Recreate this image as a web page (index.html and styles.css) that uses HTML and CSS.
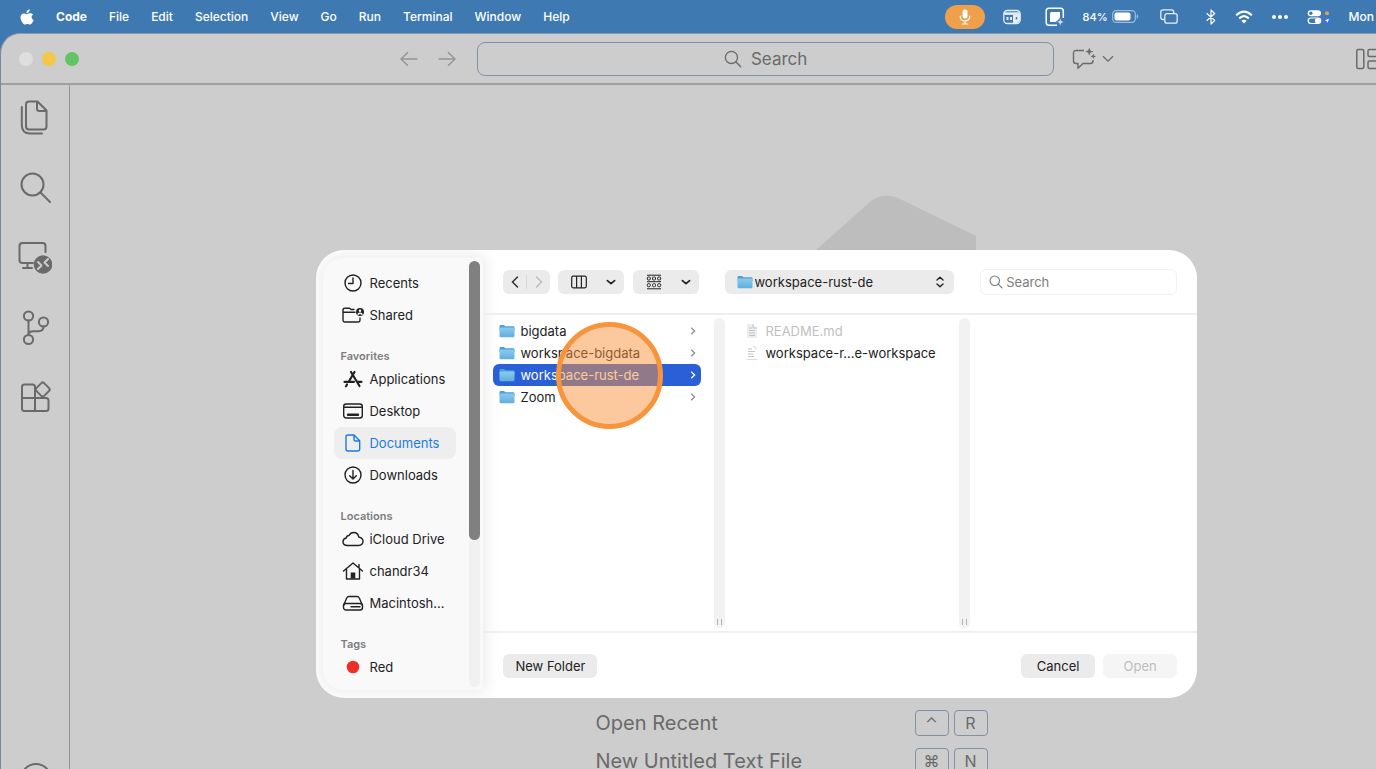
FILE: index.html
```html
<!DOCTYPE html>
<html lang="en">
<head>
    <meta charset="UTF-8">
    <meta name="viewport" content="width=device-width, initial-scale=1.0">
    <title>Code - Open Folder</title>
    <link rel="stylesheet" href="styles.css">
</head>
<body>
    <svg class="sprite" aria-hidden="true">
        <defs>
            <linearGradient id="folder-front" x1="0" y1="0" x2="0" y2="1">
                <stop offset="0" stop-color="#8accf0"/>
                <stop offset="1" stop-color="#62aede"/>
            </linearGradient>
        </defs>
        <symbol id="folder" viewBox="0 0 16 14">
            <path d="M.5 2.2Q.5 1 1.7 1H5l1.4 1.2h7.9q1.2 0 1.2 1.2V6H.5z" fill="#4f9fd0"/>
            <rect x=".5" y="3.4" width="15" height="9.8" rx="1.1" fill="url(#folder-front)"/>
        </symbol>
        <symbol id="next" viewBox="0 0 8 10">
            <path d="M2.2 1.8 5.6 5 2.2 8.2" fill="none" stroke="currentColor" stroke-width="1.3"/>
        </symbol>
        <symbol id="down" viewBox="0 0 10 10">
            <path d="M2 3.8 5 6.4 8 3.8" fill="none" stroke="currentColor" stroke-width="1.4" stroke-linecap="round" stroke-linejoin="round"/>
        </symbol>
        <symbol id="lens" viewBox="0 0 16 16">
            <circle cx="6.6" cy="6.6" r="5.4" fill="none" stroke="currentColor" stroke-width="1.2"/>
            <path d="m10.5 10.5 4.3 4.3" stroke="currentColor" stroke-width="1.3" stroke-linecap="round"/>
        </symbol>
    </svg>

    <header class="menubar">
        <nav class="menus" aria-label="Menu bar">
            <a href="#" aria-label="Apple" class="apple">
                <svg width="14" height="16" viewBox="0 0 14 16" fill="currentColor"><path d="M9.7.3c.1 1.1-.3 2-.9 2.7-.6.7-1.5 1.1-2.3 1.1-.1-1 .4-2 .9-2.6C8 .8 9 .4 9.7.3zM13.2 5.5c-1.1.7-1.6 1.5-1.6 2.6 0 1.3.8 2.4 2 2.9-.3 1-.9 2-1.5 2.9-.6.8-1.2 1.6-2.2 1.6s-1.3-.6-2.5-.6-1.5.6-2.5.6-1.6-.9-2.3-1.8C1.3 12 .5 10 .5 8.4.5 5.8 2.2 4.4 3.9 4.4c1 0 1.9.7 2.6.7s1.800-.8 3.200-.8c1.300 0 2.600.5 3.500 1.200z"/></svg>
            </a>
            <a href="#" class="app-name">Code</a>
            <a href="#">File</a>
            <a href="#">Edit</a>
            <a href="#">Selection</a>
            <a href="#">View</a>
            <a href="#">Go</a>
            <a href="#">Run</a>
            <a href="#">Terminal</a>
            <a href="#">Window</a>
            <a href="#">Help</a>
        </nav>
        <div class="status">
            <span class="mic">
                <svg width="12" height="16" viewBox="0 0 12 16"><rect x="3.5" y=".5" width="5" height="9" rx="2.5" fill="#fff"/><path d="M1.3 7v1a4.7 4 0 0 0 9.4 0V7M6 12v2.8M3.3 15h5.4" fill="none" stroke="#fff" stroke-width="1.2" stroke-linecap="round"/></svg>
            </span>
            <svg width="18" height="16" viewBox="0 0 18 16" fill="none" stroke="#e4eef7"><rect x=".8" y="1.5" width="16.4" height="13" rx="3.5" stroke-width="1.3"/><path d="M1 4.6h16" stroke-width="2.6"/><path d="M10 6h7v4q0 4-4 4h-3z" fill="#e4eef7" stroke="none"/><path d="M4.5 8v3M8 8v3" stroke-width="2"/><path d="M13.5 8v2.5" stroke="#3f79b2" stroke-width="1.5"/></svg>
            <svg class="spaced" width="20" height="20" viewBox="0 0 20 20"><path d="M12 18.2H4q-2.800 0-2.800-2.800V4Q1.200 1.200 4 1.200h11.500q2.800 0 2.800 2.800v7" fill="none" stroke="#fff" stroke-width="1.5"/><path d="M5 6.5Q5 5 6.500 5H15v6l-4 4H5z" fill="#fff"/><path d="m15.300 10.500 1.200 3.300 3.300 1.200-3.300 1.200-1.200 3.300-1.200-3.300-3.300-1.200 3.300-1.200z" fill="#cfe0f0" stroke="#3f79b2" stroke-width=".8"/></svg>
            <span class="battery">84%
                <svg width="27" height="13" viewBox="0 0 27 13"><rect x=".6" y=".6" width="22.8" height="11.8" rx="3.6" fill="none" stroke="#9cbcd9" stroke-width="1.2"/><rect x="2.5" y="2.4" width="16" height="8.2" rx="2" fill="#fff"/><path d="M24.7 4.3q1.600.4 1.600 2.200t-1.600 2.200z" fill="#9cbcd9"/></svg>
            </span>
            <svg class="windows" width="18" height="15" viewBox="0 0 18 15" fill="none" stroke="#e4eef7" stroke-width="1.3"><path d="M4.500 10.500H3Q.8 10.500.8 8.300V3Q.8.8 3 .8h8.500q2.200 0 2.200 2.200v1.200"/><rect x="4.8" y="4.6" width="12.4" height="9.5" rx="2.2"/></svg>
            <svg class="bluetooth" width="12" height="16" viewBox="0 0 12 16" fill="none" stroke="#fff" stroke-width="1.2" stroke-linejoin="round"><path d="m1.700 4.300 8 7.200L6 15V1l3.700 3.500-8 7.200"/></svg>
            <svg width="18" height="14" viewBox="0 0 18 14" fill="none" stroke="#fff" stroke-width="2.2"><path d="M1.200 5.200q7.800-7 15.600 0M4.200 8.400q4.800-4.400 9.600 0"/><path d="M9 13.500 6.300 10.800q2.700-2 5.400 0z" fill="#fff" stroke="none"/></svg>
            <svg width="18" height="6" viewBox="0 0 18 6" fill="#fff"><circle cx="3" cy="3" r="2"/><circle cx="9" cy="3" r="2"/><circle cx="15" cy="3" r="2"/></svg>
            <svg width="24" height="16" viewBox="0 0 24 16"><rect x=".7" y="1.2" width="13.3" height="6" rx="3" fill="#fff"/><circle cx="3.8" cy="4.2" r="1.7" fill="#3f79b2"/><rect x="1.2" y="9" width="12.5" height="5.5" rx="2.7" fill="none" stroke="#fff" stroke-width="1.2"/><circle cx="10.5" cy="11.7" r="2.6" fill="#fff"/><circle cx="20" cy="4.3" r="2" fill="#d9a35c"/><circle cx="20" cy="11.8" r="3.8" fill="#3f6fe0"/><path d="m22 9.800-1.400 4-1-1.700-1.700-.9z" fill="#fff"/></svg>
            <span>Mon</span>
        </div>
    </header>

    <main class="window">
        <div class="titlebar">
            <div class="lights"><span class="light"></span><span class="light yellow"></span><span class="light green"></span></div>
            <div class="history">
                <button aria-label="Go back"><svg width="18" height="16" viewBox="0 0 18 16"><path d="M17.5 8H1M8 1.200 1 8l7 6.800"/></svg></button>
                <button aria-label="Go forward"><svg width="18" height="16" viewBox="0 0 18 16"><path d="M.5 8H17M10 1.200 17 8l-7 6.800"/></svg></button>
            </div>
            <button class="command-center"><svg width="18" height="18"><use href="#lens"/></svg>Search</button>
            <button class="chat" aria-label="Toggle chat">
                <svg width="24" height="22" viewBox="0 0 24 22" fill="none" stroke="currentColor" stroke-width="1.4" stroke-linejoin="round"><path d="M12 2.500H4Q1.500 2.500 1.500 5v8q0 2.500 2.500 2.500h2v4.700l5-4.700h7.500Q21 15.500 21 13v-1"/><path d="m17.300-.5 1.100 3 3 1.100-3 1.100-1.100 3-1.100-3-3-1.100 3-1.100zM21.300 5.700l.8 1.900 1.900.8-1.900.8-.8 1.900-.8-1.900-1.900-.8 1.900-.8z" fill="currentColor" stroke="none"/></svg>
                <svg width="12" height="8" viewBox="0 0 12 8" fill="none" stroke="currentColor" stroke-width="1.3"><path d="m1 1.200 5 5 5-5"/></svg>
            </button>
            <button class="layout-toggle" aria-label="Customize layout">
                <svg width="20" height="22" viewBox="0 0 20 22" fill="none" stroke="currentColor" stroke-width="1.5"><rect x=".8" y="1.5" width="7" height="19" rx="1.5"/><rect x="12" y="1.5" width="12" height="7" rx="1.5"/><rect x="12" y="13" width="12" height="7.5" rx="1.5"/></svg>
            </button>
        </div>

        <div class="workbench">
            <nav class="activity-bar" aria-label="Activity bar">
                <button aria-label="Explorer"><svg viewBox="0 0 34 36"><path d="M11 1.500h8.500l9 9V26.500q0 3-3 3H11q-3 0-3-3V4.500q0-3 3-3zM19 2v6.500q0 2.500 2.500 2.500h6.500M3.800 7v18q0 8.500 8.500 8.500H24"/></svg></button>
                <button aria-label="Search"><svg viewBox="0 0 34 36"><circle cx="14.5" cy="14.5" r="11"/><path d="m22.500 22.500 9.500 9.500"/></svg></button>
                <button aria-label="Remote Explorer"><svg viewBox="0 0 34 36"><path d="M27.500 12V6q0-3-3-3h-20q-3 0-3 3v14q0 3 3 3H15M9.500 23.500v4M5 28h9"/><circle cx="25" cy="24.5" r="9.3" class="solid"/><path d="m20 22 3.500 3.500L20 29M30 19l-3.500 3.500L30 26" class="knockout"/></svg></button>
                <button aria-label="Source Control"><svg viewBox="0 0 34 36"><circle cx="10.5" cy="6" r="4.6"/><circle cx="10.5" cy="29.5" r="4.6"/><circle cx="25.5" cy="12" r="4.6"/><path d="M10.500 10.600V25M25.500 16.600q0 4.600-5 4.600h-5q-5 0-5 4"/></svg></button>
                <button aria-label="Extensions"><svg viewBox="0 0 34 36"><path d="M17 18V7q0-2.500-2.500-2.500h-8Q4 4.500 4 7v21.500Q4 31 6.500 31H28q2.500 0 2.500-2.500v-8Q30.500 18 28 18zM4 18h13v13"/><rect x="19.2" y="4" width="11" height="11" rx="2" transform="rotate(45 24.7 9.5)"/></svg></button>
                <button class="account" aria-label="Accounts"><svg viewBox="0 0 34 36"><circle cx="18" cy="18" r="15"/></svg></button>
            </nav>

            <section class="editor">
                <svg class="watermark" viewBox="0 0 368 368"><path d="M208 55 262 7q12-10 28-4l78 38v286l-78 38q-16 6-28-5z"/></svg>
                <dl class="shortcuts">
                    <dt>Open Recent</dt><dd><kbd>⌃</kbd><kbd>R</kbd></dd>
                    <dt>New Untitled Text File</dt><dd><kbd>⌘</kbd><kbd>N</kbd></dd>
                </dl>
            </section>
        </div>
    </main>

    <div class="dialog" role="dialog" aria-label="Open folder">
        <aside class="places">
            <nav class="place-list">
                <a href="#"><svg viewBox="0 0 22 20"><circle cx="11" cy="10" r="8"/><path d="M11 5v5.500H6.500"/></svg>Recents</a>
                <a href="#"><svg viewBox="0 0 22 20"><path d="M12 4.500H9L7.500 3.200H2.700Q1 3.200 1 5v10.300Q1 17 2.700 17h13.600q1.700 0 1.700-1.700V13M1 7.300h12"/><circle cx="18" cy="7" r="4" class="filled"/><circle cx="18" cy="5.8" r="1.2" class="hole"/><path d="M16 9.300q2-2 4 0" class="hole-line"/></svg>Shared</a>
                <h2>Favorites</h2>
                <a href="#"><svg viewBox="0 0 22 20" class="thick"><path d="m9 3 8.500 14M12.500 3 6.700 12.800M5 15.500 4 17.200M2.500 12.800h9.500M16 12.800h3.500"/></svg>Applications</a>
                <a href="#"><svg viewBox="0 0 22 20"><rect x="1.7" y="3" width="18.6" height="14" rx="2.5"/><path d="M2 6.300h18"/><rect x="5" y="12.5" width="12" height="2.5" rx=".7" class="filled"/></svg>Desktop</a>
                <a href="#" class="current"><svg viewBox="0 0 22 20"><path d="M6 2h6l5.700 5.700V16q0 2-2 2H6q-2 0-2-2V4q0-2 2-2zM12 2v4.500q0 1.500 1.500 1.500h4"/></svg>Documents</a>
                <a href="#"><svg viewBox="0 0 22 20"><circle cx="11" cy="10" r="8"/><path d="M11 5.500v8.500M7.700 10.800 11 14l3.300-3.200"/></svg>Downloads</a>
                <h2>Locations</h2>
                <a href="#"><svg viewBox="0 0 22 20"><path d="M5.500 16.500Q1 16.300 1 12.700q0-3 3.300-3.700Q4.300 6.700 7 6.500 8.500 3.500 11.700 3.500q4.300 0 5 4.500 4.300.8 4.300 4.300 0 4-4.500 4.200z"/></svg>iCloud Drive</a>
                <a href="#"><svg viewBox="0 0 22 20"><path d="M1.500 10 11 2l9.500 8M4.500 8.500V18h13V8.500M17 3.500v3"/><rect x="8.7" y="11.5" width="4.6" height="6" class="filled"/></svg>chandr34</a>
                <a href="#"><svg viewBox="0 0 22 20"><path d="M1.500 12.500 4.700 5Q5.300 3.500 7 3.500h8q1.700 0 2.300 1.500l3.200 7.500"/><rect x="1.5" y="10.5" width="19" height="6.5" rx="2.5"/><path d="M9 13.800h9"/></svg>Macintosh...</a>
                <h2>Tags</h2>
                <a href="#"><svg viewBox="0 0 22 20"><circle cx="11" cy="10" r="6.3" class="red-tag"/></svg>Red</a>
            </nav>
            <div class="scroll-track"><div class="scroll-thumb"></div></div>
        </aside>

        <div class="browser">
            <div class="toolbar">
                <div class="nav-group">
                    <button aria-label="Back"><svg width="10" height="14" viewBox="0 0 10 14"><path d="M7.500 2 2.500 7l5 5"/></svg></button>
                    <button aria-label="Forward" disabled><svg width="10" height="14" viewBox="0 0 10 14"><path d="m2.500 2 5 5-5 5"/></svg></button>
                </div>
                <button class="view-button" aria-label="Column view">
                    <svg width="16" height="14" viewBox="0 0 16 14" fill="none" stroke="currentColor" stroke-width="1.2"><rect x=".7" y="1.2" width="14.6" height="11.6" rx="1.5"/><path d="M5.600 1.200v11.600M10.400 1.200v11.600"/></svg>
                    <svg width="12" height="12"><use href="#down"/></svg>
                </button>
                <button class="view-button" aria-label="Group items">
                    <svg width="16" height="16" viewBox="0 0 16 16" fill="none" stroke="currentColor"><path d="M1 1.200h14M1 7.700h14M1 14.800h14"/><rect x="1.3" y="3" width="3" height="3" rx="1"/><rect x="6.5" y="3" width="3" height="3" rx="1"/><rect x="11.7" y="3" width="3" height="3" rx="1"/><rect x="1.3" y="9.7" width="3" height="3" rx="1"/><rect x="6.5" y="9.7" width="3" height="3" rx="1"/><rect x="11.7" y="9.7" width="3" height="3" rx="1"/></svg>
                    <svg width="12" height="12"><use href="#down"/></svg>
                </button>
                <div class="location">
                    <svg width="16" height="14"><use href="#folder"/></svg>
                    <select aria-label="Location"><option>workspace-rust-de</option></select>
                    <svg width="10" height="14" viewBox="0 0 10 14" fill="none" stroke="currentColor" stroke-width="1.4" stroke-linecap="round" stroke-linejoin="round"><path d="M2 5 5 2.200 8 5M2 9l3 2.800L8 9"/></svg>
                </div>
                <label class="find">
                    <svg width="14" height="14"><use href="#lens"/></svg>
                    <input type="text" placeholder="Search" aria-label="Search">
                </label>
            </div>

            <div class="columns">
                <div class="column">
                    <button class="entry"><svg width="16" height="14"><use href="#folder"/></svg><span>bigdata</span><svg class="next" width="8" height="10"><use href="#next"/></svg></button>
                    <button class="entry"><svg width="16" height="14"><use href="#folder"/></svg><span>workspace-bigdata</span><svg class="next" width="8" height="10"><use href="#next"/></svg></button>
                    <button class="entry selected"><svg width="16" height="14"><use href="#folder"/></svg><span>workspace-rust-de</span><svg class="next" width="8" height="10"><use href="#next"/></svg></button>
                    <button class="entry"><svg width="16" height="14"><use href="#folder"/></svg><span>Zoom</span><svg class="next" width="8" height="10"><use href="#next"/></svg></button>
                    <div class="click-marker"></div>
                </div>
                <div class="divider"><span class="grip"></span></div>
                <div class="column files">
                    <button class="entry" disabled><svg width="16" height="14" viewBox="0 0 16 14"><path d="M3 0h6l4 4v10H3z" fill="#eee"/><path d="M5 4h3M5 6.500h6M5 9h6M5 11.500h6M9 0v4h4" stroke="#c4c4c4" fill="none"/></svg><span>README.md</span></button>
                    <button class="entry"><svg width="16" height="14" viewBox="0 0 16 14"><path d="M4 3h4M4 5.500h7M4 8h5M4 10.500h6M9.500 0l3 3" stroke="#c4c4c4" fill="none"/><path d="M2.500 13.500h11" stroke="#ddd"/></svg><span>workspace-r...e-workspace</span></button>
                </div>
                <div class="divider"><span class="grip"></span></div>
                <div class="column"></div>
            </div>

            <div class="actions">
                <button class="push">New Folder</button>
                <button class="push cancel">Cancel</button>
                <button class="push" disabled>Open</button>
            </div>
        </div>
    </div>
</body>
</html>
```
FILE: styles.css
```css
* {
    box-sizing: border-box;
}

body {
    margin: 0;
    height: 100vh;
    display: flex;
    flex-direction: column;
    overflow: hidden;
    position: relative;
    background: #3f79b2;
    font-family: Inter, "Liberation Sans", sans-serif;
    font-size: 13px;
    color: #222;
}

button, input, select {
    font: inherit;
    color: inherit;
    border: none;
    background: none;
    padding: 0;
    margin: 0;
}

a {
    color: inherit;
    text-decoration: none;
}

svg {
    flex-shrink: 0;
}

.sprite {
    position: absolute;
    width: 0;
    height: 0;
}

/* macOS menu bar */
.menubar {
    height: 33px;
    flex-shrink: 0;
    display: flex;
    align-items: center;
    justify-content: space-between;
    padding: 0 2px 0 20px;
    color: #fff;
    font-size: 12px;
    font-weight: 500;
    white-space: nowrap;
}

.menus {
    display: flex;
    align-items: center;
    gap: 22px;
}

.apple {
    display: flex;
}

.app-name {
    font-weight: 700;
}

.status {
    display: flex;
    align-items: center;
    gap: 18px;
}

.mic {
    width: 40px;
    height: 24px;
    border-radius: 12px;
    background: #f0a04b;
    display: flex;
    align-items: center;
    justify-content: center;
}

.battery {
    display: flex;
    align-items: center;
    gap: 4px;
    font-size: 11px;
}

.spaced {
    margin-left: 6px;
}

.windows {
    margin-left: 3px;
}

.bluetooth {
    margin-left: 9px;
}

/* editor window */
.window {
    flex: 1;
    min-height: 0;
    display: flex;
    flex-direction: column;
    background: #cdcdcd;
    border-left: 1px solid #7f8a99;
    border-top: 1px solid #8a9bb0;
    border-top-left-radius: 20px;
    color: #6a6a6a;
    overflow: hidden;
}

.titlebar {
    height: 51px;
    flex-shrink: 0;
    display: flex;
    align-items: center;
    border-bottom: 2px solid #9f9f9f;
    padding-left: 18px;
}

.lights {
    display: flex;
    gap: 9px;
}

.light {
    width: 14px;
    height: 14px;
    border-radius: 50%;
    background: #dedede;
}

.yellow {
    background: #f2c846;
}

.green {
    background: #63c466;
}

.history {
    display: flex;
    gap: 20px;
    margin-left: auto;
    margin-right: 21px;
}

.history svg {
    display: block;
    fill: none;
    stroke: #949494;
    stroke-width: 1.4;
}

.command-center {
    width: 42.5%;
    height: 34px;
    flex-shrink: 0;
    display: flex;
    align-items: center;
    justify-content: center;
    gap: 9px;
    border: 1px solid #8490a3;
    border-radius: 8px;
    font-size: 17px;
}

.chat {
    display: flex;
    align-items: center;
    gap: 6px;
    margin-left: 18px;
    margin-right: 242px;
}

.layout-toggle svg {
    display: block;
}

.workbench {
    flex: 1;
    min-height: 0;
    display: flex;
}

.activity-bar {
    width: 69px;
    flex-shrink: 0;
    display: flex;
    flex-direction: column;
    align-items: center;
    gap: 34px;
    padding-top: 15px;
    border-right: 1px solid #949494;
}

.activity-bar svg {
    display: block;
    width: 34px;
    height: 36px;
    fill: none;
    stroke: #6a6a6a;
    stroke-width: 2;
    stroke-linecap: round;
    stroke-linejoin: round;
}

.activity-bar .solid {
    fill: #6a6a6a;
    stroke: none;
}

.activity-bar .knockout {
    stroke: #cdcdcd;
}

.activity-bar .account {
    margin-top: auto;
    margin-bottom: -28px;
}

.editor {
    flex: 1;
    display: flex;
    flex-direction: column;
    align-items: center;
    padding-top: 110px;
    padding-left: 137px;
    overflow: hidden;
}

.watermark {
    width: 368px;
    height: 368px;
    flex-shrink: 0;
    fill: #bdbdbd;
}

.shortcuts {
    width: 392px;
    margin: 147px 0 0;
    display: grid;
    grid-template-columns: 1fr auto;
    row-gap: 12px;
    align-items: center;
    font-size: 20px;
    line-height: 26px;
}

.shortcuts dd {
    margin: 0;
    display: flex;
    gap: 5px;
}

kbd {
    width: 34px;
    height: 26px;
    border: 1px solid #8490a3;
    border-radius: 4px;
    text-align: center;
    font-family: inherit;
    font-size: 16px;
    line-height: 24px;
}

/* open dialog */
.dialog {
    position: absolute;
    top: 250px;
    left: 23%;
    right: 13%;
    display: flex;
    background: #fff;
    border-radius: 28px;
    overflow: hidden;
}

.places {
    width: 160px;
    flex-shrink: 0;
    margin: 8px 0 8px 7px;
    display: flex;
    background: #f9f9fa;
    border-radius: 20px 4px 4px 20px;
    box-shadow: 0 0 14px 4px rgba(0, 0, 0, 0.07);
}

.place-list {
    flex: 1;
    min-width: 0;
    padding: 9px 13px 7px 11px;
}

.place-list a {
    height: 32px;
    display: flex;
    align-items: center;
    gap: 5px;
    padding-left: 8px;
    border-radius: 8px;
    white-space: nowrap;
}

.place-list svg {
    width: 22px;
    height: 20px;
    fill: none;
    stroke: currentColor;
    stroke-width: 1.4;
    stroke-linecap: round;
    stroke-linejoin: round;
}

.place-list .thick {
    stroke-width: 2.2;
}

.place-list .filled {
    fill: currentColor;
    stroke: none;
}

.place-list .hole {
    fill: #fff;
    stroke: none;
}

.place-list .hole-line {
    stroke: #fff;
}

.place-list .red-tag {
    fill: #ee3028;
    stroke: none;
}

.place-list .current {
    background: #eeeeef;
    color: #1a7be6;
}

.place-list h2 {
    margin: 0;
    height: 32px;
    padding: 18px 0 0 6px;
    font-size: 11px;
    line-height: 14px;
    font-weight: 600;
    color: #7d7d7d;
}

.scroll-track {
    width: 11px;
    margin: 3px 3px 3px 0;
    border-radius: 6px;
    background: #f1f1f1;
}

.scroll-thumb {
    height: 279px;
    border-radius: 6px;
    background: #808080;
}

.browser {
    flex: 1;
    min-width: 0;
    display: flex;
    flex-direction: column;
}

.toolbar {
    height: 65px;
    display: flex;
    align-items: center;
    padding: 0 20px;
    border-bottom: 2px solid #efefef;
}

.nav-group, .view-button, .location {
    height: 24px;
    display: flex;
    align-items: center;
    border-radius: 6px;
    background: #ebebeb;
}

.nav-group {
    width: 47px;
    margin-right: 8px;
}

.nav-group button {
    flex: 1;
    display: flex;
    justify-content: center;
}

.nav-group button + button {
    border-left: 1px solid #d8d8d8;
}

.nav-group svg {
    fill: none;
    stroke: #333;
    stroke-width: 1.5;
    stroke-linecap: round;
}

.nav-group button:disabled svg {
    stroke: #bdbdbd;
}

.view-button {
    width: 66px;
    margin-right: 9px;
    padding: 0 7px 0 13px;
    justify-content: space-between;
}

.location {
    flex: 1;
    margin-left: 17px;
    margin-right: 26px;
    padding: 0 9px 0 12px;
    gap: 1px;
}

.location select {
    flex: 1;
    appearance: none;
}

.find {
    width: 197px;
    height: 26px;
    display: flex;
    align-items: center;
    gap: 3px;
    padding-left: 8px;
    border: 1px solid #f1f1f1;
    border-radius: 6px;
    color: #777;
}

.find input {
    width: 100%;
    outline: none;
}

.find input::placeholder {
    color: #7d7d7d;
}

.columns {
    height: 318px;
    display: flex;
    border-bottom: 2px solid #efefef;
}

.column {
    width: 234px;
    flex-shrink: 0;
    padding: 5px 13px 0 10px;
    position: relative;
}

.column:first-child {
    width: 231px;
}

.column:last-child {
    flex: 1;
    width: auto;
}

.files {
    padding-left: 13px;
}

.entry {
    width: 100%;
    height: 22px;
    display: flex;
    align-items: center;
    gap: 5px;
    padding: 0 4px 0 6px;
    border-radius: 6px;
    white-space: nowrap;
    text-align: left;
}

.entry:disabled {
    color: #bfbfbf;
}

.entry .next {
    margin-left: auto;
    color: #8e8e8e;
}

.entry.selected {
    background: #2a5fd7;
    color: #fff;
}

.entry.selected .next {
    color: #fff;
}

.divider {
    width: 11px;
    flex-shrink: 0;
    margin: 3px 0;
    display: flex;
    align-items: flex-end;
    justify-content: center;
    padding-bottom: 3px;
    border-radius: 6px;
    background: #f2f2f2;
}

.grip {
    width: 5px;
    height: 6px;
    border: solid #b5b5b5;
    border-width: 0 1px;
}

/* click highlight over the selected folder */
.click-marker {
    position: absolute;
    top: 7px;
    left: 73px;
    width: 107px;
    height: 107px;
    border: 5px solid #f7943c;
    border-radius: 50%;
    background: rgba(247, 148, 60, 0.5);
    z-index: 1;
    pointer-events: none;
}

.actions {
    display: flex;
    align-items: center;
    gap: 8px;
    padding: 21px 20px 20px;
}

.push {
    min-width: 74px;
    height: 24px;
    padding: 0 12px;
    border-radius: 6px;
    background: #ebebeb;
}

.push:disabled {
    background: #f5f5f5;
    color: #bdbdbd;
}

.cancel {
    margin-left: auto;
}
```
